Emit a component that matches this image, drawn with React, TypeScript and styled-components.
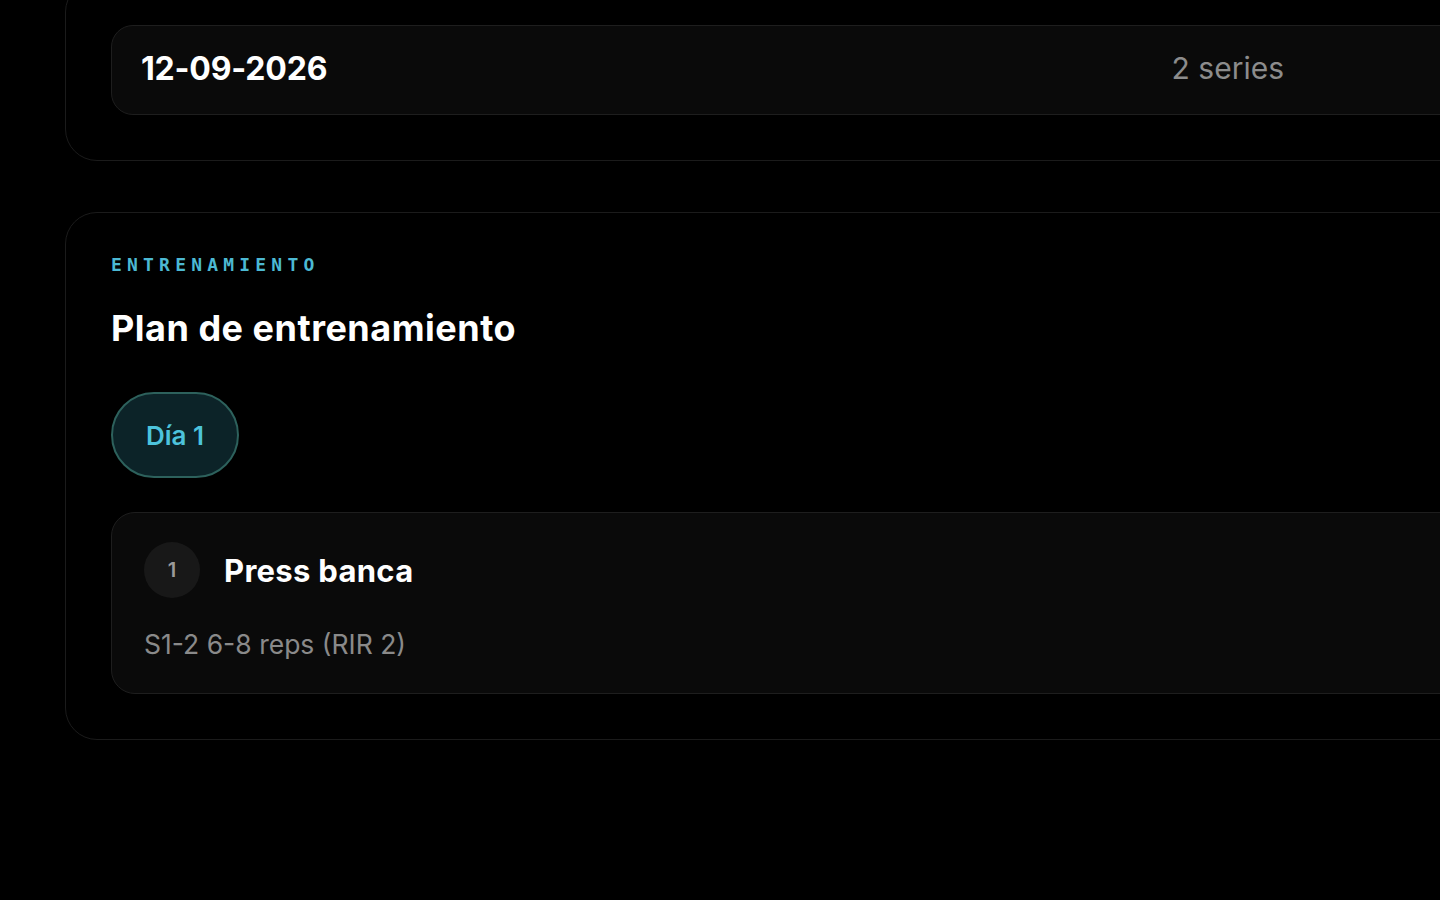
import React from 'react';
import styled, { createGlobalStyle } from 'styled-components';

const GlobalStyle = createGlobalStyle`
  html, body {
    margin: 0;
    padding: 0;
    background: #000;
    overflow: hidden;
  }
  body {
    font-family: 'Inter', 'Noto Sans', sans-serif;
    color: #fff;
    -webkit-font-smoothing: antialiased;
  }
`;

const Page = styled.main`
  width: 1600px;
  min-height: 900px;
  padding: 0 0 0 65px;
  margin-top: -20px;
  display: flex;
  flex-direction: column;
  gap: 51px;
  box-sizing: border-box;
`;

const Section = styled.section<{ $top?: number }>`
  border: 1.5px solid #1b1b1b;
  border-radius: 32px;
  padding: ${(p) => p.$top ?? 44}px 45px 45px;
  background: #000;
  display: flex;
  flex-direction: column;
`;

const HistoryRow = styled.div`
  height: 90px;
  box-sizing: border-box;
  border: 1.5px solid #1e1e1e;
  border-radius: 22px;
  background: #0a0a0a;
  display: flex;
  align-items: center;
  padding: 0 269px 4px 29px;
`;

const DateText = styled.span`
  font-size: 32px;
  font-weight: 700;
  letter-spacing: -0.2px;
  color: #fff;
`;

const SeriesText = styled.span`
  margin-left: auto;
  font-size: 30px;
  font-weight: 400;
  color: #8c8c8c;
`;

const Eyebrow = styled.span`
  font-family: 'DejaVu Sans Mono', 'Liberation Mono', monospace;
  font-size: 18px;
  font-weight: 700;
  letter-spacing: 5.2px;
  color: #4cb9d3;
  line-height: 24px;
`;

const Title = styled.h2`
  margin: 31px 0 0;
  font-size: 36px;
  font-weight: 700;
  letter-spacing: 0.5px;
  line-height: 40px;
  color: #fff;
`;

const DayTabs = styled.div`
  display: flex;
  gap: 12px;
  margin-top: 44px;
`;

const DayPill = styled.button<{ $active: boolean }>`
  box-sizing: border-box;
  height: 86px;
  padding: 0 33px;
  border-radius: 43px;
  border: 2px solid ${(p) => (p.$active ? '#2d615c' : '#1e1e1e')};
  background: ${(p) => (p.$active ? '#0c2328' : '#0a0a0a')};
  color: ${(p) => (p.$active ? '#4dc3dc' : '#8c8c8c')};
  font-family: 'Inter', sans-serif;
  font-size: 26px;
  font-weight: 600;
  cursor: pointer;
`;

const ExerciseCard = styled.div`
  margin-top: 34px;
  border: 1.5px solid #1e1e1e;
  border-radius: 24px;
  background: #0a0a0a;
  padding: 29px 32px 33px;
  display: flex;
  flex-direction: column;
  gap: 30px;
`;

const ExerciseHead = styled.div`
  display: flex;
  align-items: center;
  gap: 24px;
`;

const IndexBadge = styled.span`
  width: 56px;
  height: 56px;
  border-radius: 50%;
  background: #181818;
  color: #9a9a9a;
  display: flex;
  align-items: center;
  justify-content: center;
  font-size: 20px;
  font-weight: 600;
`;

const ExerciseName = styled.span`
  font-size: 31px;
  font-weight: 700;
  letter-spacing: 0.3px;
  color: #fff;
`;

const ExerciseDetail = styled.span`
  font-size: 26.5px;
  font-weight: 400;
  color: #8a8a8a;
`;

const exercises = [{ name: 'Press banca', detail: 'S1-2 6-8 reps (RIR 2)' }];

export default function App() {
  return (
    <>
      <GlobalStyle />
      <Page>
        <Section>
          <HistoryRow>
            <DateText>12-09-2026</DateText>
            <SeriesText>2 series</SeriesText>
          </HistoryRow>
        </Section>
        <Section $top={40}>
          <Eyebrow>ENTRENAMIENTO</Eyebrow>
          <Title>Plan de entrenamiento</Title>
          <DayTabs>
            <DayPill $active>Día 1</DayPill>
          </DayTabs>
          {exercises.map((ex, i) => (
            <ExerciseCard key={ex.name}>
              <ExerciseHead>
                <IndexBadge>{i + 1}</IndexBadge>
                <ExerciseName>{ex.name}</ExerciseName>
              </ExerciseHead>
              <ExerciseDetail>{ex.detail}</ExerciseDetail>
            </ExerciseCard>
          ))}
        </Section>
      </Page>
    </>
  );
}
